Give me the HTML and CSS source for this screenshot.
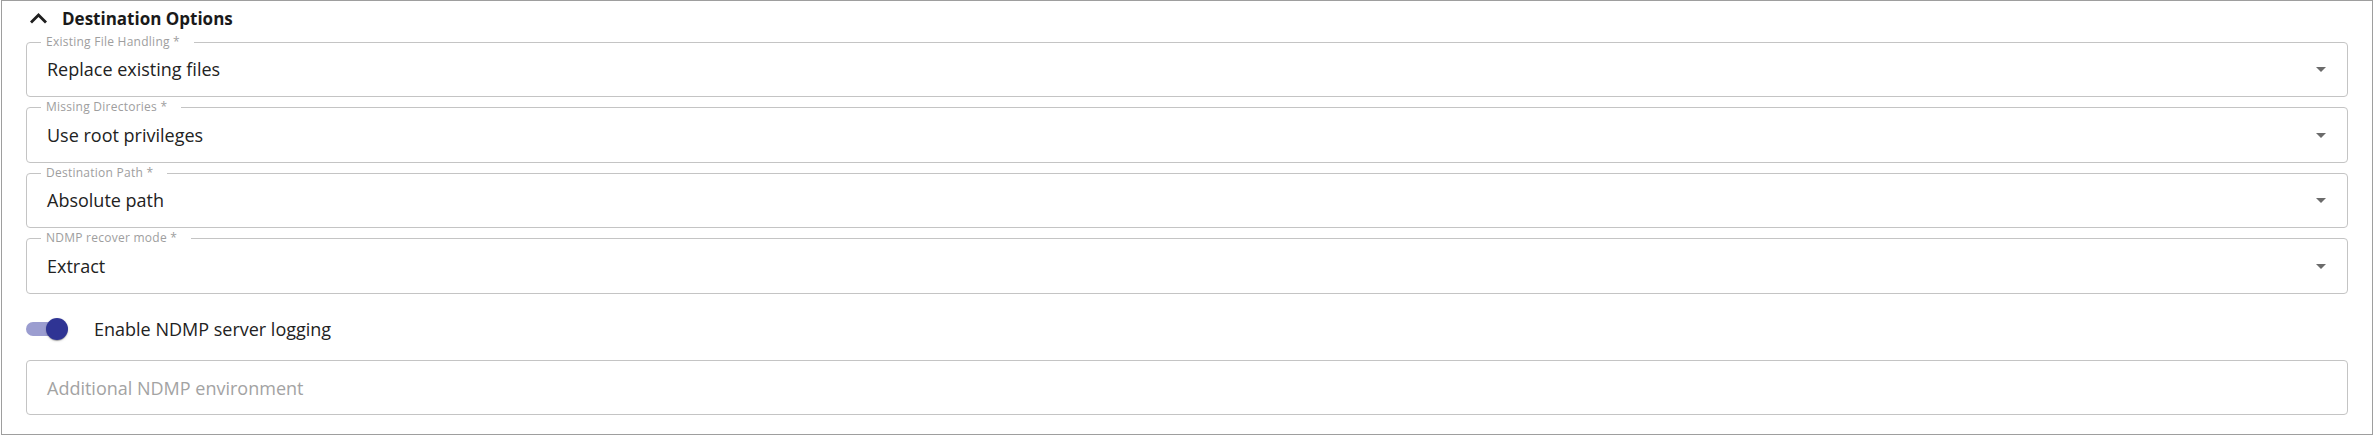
FILE: index.html
```html
<!DOCTYPE html>
<html>
<head>
<meta charset="utf-8">
<link rel="stylesheet" href="styles.css">
</head>
<body>
<div class="panel">
  <div class="header">
    <svg class="chev" width="17" height="10.5" viewBox="6 8 12 7.41"><path d="M12 8l-6 6 1.41 1.41L12 10.83l4.59 4.58L18 14z" fill="#1f1f1f"/></svg>
    <span class="title">Destination Options</span>
  </div>
  <div class="fields">
    <div class="field">
      <span class="label">Existing File Handling *</span>
      <span class="value">Replace existing files</span>
      <svg class="arrow" width="24" height="24" viewBox="0 0 24 24"><path d="M7 10l5 5 5-5z" fill="#6b6b6b"/></svg>
    </div>
    <div class="field">
      <span class="label">Missing Directories *</span>
      <span class="value">Use root privileges</span>
      <svg class="arrow" width="24" height="24" viewBox="0 0 24 24"><path d="M7 10l5 5 5-5z" fill="#6b6b6b"/></svg>
    </div>
    <div class="field">
      <span class="label">Destination Path *</span>
      <span class="value">Absolute path</span>
      <svg class="arrow" width="24" height="24" viewBox="0 0 24 24"><path d="M7 10l5 5 5-5z" fill="#6b6b6b"/></svg>
    </div>
    <div class="field">
      <span class="label">NDMP recover mode *</span>
      <span class="value">Extract</span>
      <svg class="arrow" width="24" height="24" viewBox="0 0 24 24"><path d="M7 10l5 5 5-5z" fill="#6b6b6b"/></svg>
    </div>
  </div>
  <div class="toggle-row">
    <span class="switch"><span class="track"></span><span class="thumb"></span></span>
    <span class="toggle-label">Enable NDMP server logging</span>
  </div>
  <div class="field text-field">
    <span class="placeholder">Additional NDMP environment</span>
  </div>
</div>
</body>
</html>
```
FILE: styles.css
```css
* { box-sizing: border-box; }
html, body { margin: 0; padding: 0; background: #fff; }
body { font-family: "Open Sans", "Noto Sans", sans-serif; color: #212121; }
.panel {
  margin-left: 1px;
  width: 2372px;
  height: 435px;
  border: 1px solid #9e9e9e;
  padding: 0 24px;
}
.header {
  height: 35px;
  display: flex;
  align-items: center;
  padding-left: 4px;
  gap: 15px;
}
.chev { display: block; }
.title { font-size: 17px; font-weight: 700; color: #1a1a1a; }
.fields {
  margin-top: 5.7px;
  display: flex;
  flex-direction: column;
  gap: 9.9px;
}
.field {
  position: relative;
  height: 55.6px;
  border: 1px solid #c4c4c4;
  border-radius: 4px;
  display: flex;
  align-items: center;
  padding: 0 14px 0 20px;
}
.label {
  position: absolute;
  top: -7px;
  left: 14px;
  padding: 0 14px 0 5px;
  background: #fff;
  font-size: 12px;
  letter-spacing: 0.25px;
  line-height: 12px;
  color: #9e9e9e;
}
.value { flex: 1; font-size: 18px; color: #222; }
.arrow { display: block; }
.toggle-row {
  margin-top: 18px;
  height: 34px;
  display: flex;
  align-items: center;
  gap: 22px;
}
.switch {
  position: relative;
  width: 46px;
  height: 24px;
  display: block;
}
.track {
  position: absolute;
  left: 0;
  top: 5px;
  width: 38px;
  height: 14px;
  border-radius: 7px;
  background: #9b9dd0;
}
.thumb {
  position: absolute;
  left: 20px;
  top: 1px;
  width: 22px;
  height: 22px;
  border-radius: 50%;
  background: #2f3494;
  box-shadow: 0 2px 1px -1px rgba(0,0,0,0.2), 0 1px 1px 0 rgba(0,0,0,0.14), 0 1px 3px 0 rgba(0,0,0,0.12);
}
.toggle-label { font-size: 18px; color: #222; }
.text-field { margin-top: 14px; }
.placeholder { font-size: 18px; color: #a3a3a3; }
```
